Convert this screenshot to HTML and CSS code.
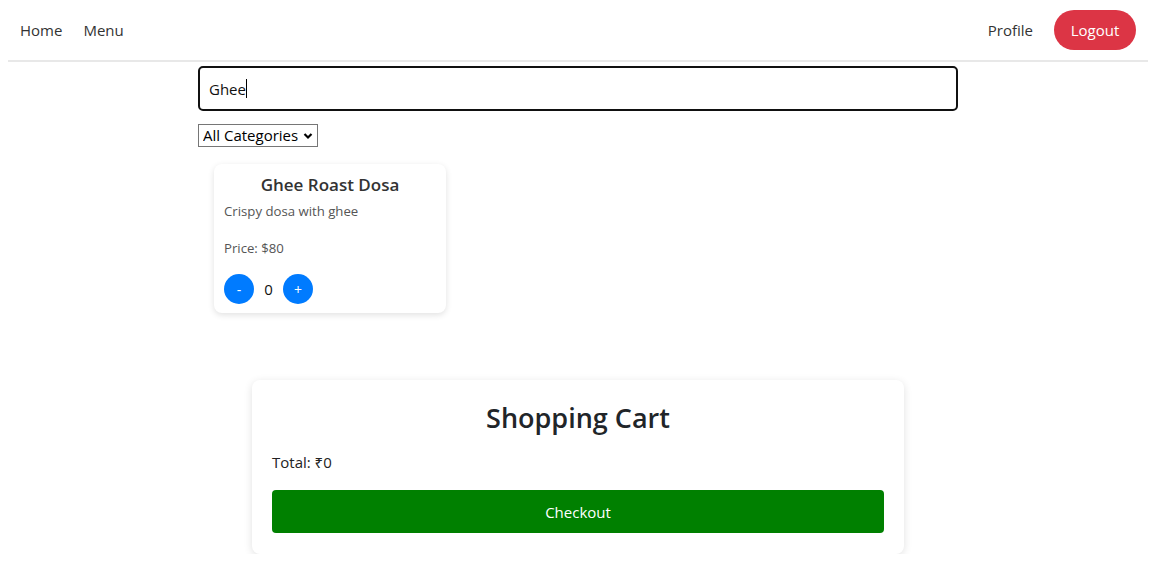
FILE: index.html
```html
<!DOCTYPE html>
<html lang="en">
<head>
<meta charset="utf-8">
<title>Menu</title>
<link rel="stylesheet" href="styles.css">
</head>
<body>
<div class="app">
  <nav class="navbar">
    <div class="nav-links">
      <a href="#" class="nav-link">Home</a>
      <a href="#" class="nav-link">Menu</a>
    </div>
    <div class="nav-links">
      <a href="#" class="nav-link">Profile</a>
      <button class="logout-btn">Logout</button>
    </div>
  </nav>

  <section class="menu">
    <div class="search-box"><span class="search-text">Ghee</span><span class="caret"></span></div>
    <div class="select-wrap">
      <select class="category-select">
        <option>All Categories</option>
      </select>
      <svg class="chevron" width="10" height="8" viewBox="0 0 10 8"><path d="M1.5 2 L5 5.5 L8.5 2" fill="none" stroke="#000" stroke-width="2.2"/></svg>
    </div>
    <div class="items">
      <div class="card">
        <h3 class="card-title">Ghee Roast Dosa</h3>
        <p class="card-desc">Crispy dosa with ghee</p>
        <p class="card-price">Price: $80</p>
        <div class="qty">
          <button class="qty-btn">-</button>
          <span class="qty-num">0</span>
          <button class="qty-btn">+</button>
        </div>
      </div>
    </div>
  </section>

  <section class="cart">
    <h2 class="cart-title">Shopping Cart</h2>
    <p class="cart-total">Total: ₹0</p>
    <button class="checkout-btn">Checkout</button>
  </section>
</div>
</body>
</html>
```

FILE: styles.css
```css
* { box-sizing: border-box; }

body {
  margin: 0 3px 8px 8px;
  font-family: "Segoe UI", "Open Sans", "Noto Sans", sans-serif;
  color: #333;
  background: #fff;
}

.app {
  width: 1140px;
}

.navbar {
  display: flex;
  justify-content: space-between;
  align-items: center;
  padding: 10px 12px 10px 12px;
  border-bottom: 2px solid #e8e8e8;
}

.nav-links {
  display: flex;
  align-items: center;
  gap: 21px;
}

.nav-link {
  color: #333;
  text-decoration: none;
  font-size: 15px;
}

.logout-btn {
  font-family: inherit;
  font-size: 15px;
  color: #fff;
  background: #dc3545;
  border: none;
  border-radius: 20px;
  height: 40px;
  width: 82px;
  padding: 0;
}

.menu {
  width: 760px;
  margin: 4px auto 0;
}

.search-box {
  display: flex;
  align-items: center;
  height: 45px;
  border: 2px solid #111;
  border-radius: 5px;
  padding: 0 9px;
  font-size: 15px;
  color: #111;
}

.caret {
  width: 1px;
  height: 19px;
  background: #000;
}

.select-wrap {
  display: inline-flex;
  align-items: center;
  margin-top: 13px;
  height: 23px;
  width: 120px;
  border: 1px solid #767676;
  padding: 0 4px 0 4px;
}

.category-select {
  appearance: none;
  -webkit-appearance: none;
  border: none;
  background: transparent;
  font-family: inherit;
  font-size: 15px;
  color: #000;
  padding: 0;
  margin: 0;
  flex: 1;
  height: 21px;
  line-height: 21px;
}

.chevron { flex: none; }

.items {
  display: flex;
  padding: 17px 16px 0;
}

.card {
  width: 232px;
  background: #fff;
  border-radius: 8px;
  box-shadow: 0 2px 6px rgba(0, 0, 0, 0.12);
  padding: 9px 10px 9px;
}

.card-title {
  margin: 0;
  text-align: center;
  font-size: 17px;
  font-weight: 600;
  color: #333;
  line-height: 24px;
}

.card-desc {
  margin: 4px 0 0;
  font-size: 13.2px;
  line-height: 20px;
  color: #555;
}

.card-price {
  margin: 17px 0 0;
  font-size: 13.2px;
  line-height: 20px;
  color: #555;
}

.qty {
  display: flex;
  align-items: center;
  gap: 10px;
  margin-top: 16px;
}

.qty-btn {
  width: 30px;
  height: 30px;
  border-radius: 50%;
  border: none;
  background: #007bff;
  color: #fff;
  font-family: inherit;
  font-size: 14px;
  padding: 0;
}

.qty-num {
  font-size: 15px;
  color: #111;
  width: 9px;
  text-align: center;
}

.cart {
  width: 652px;
  margin: 67px auto 0;
  padding: 20px 20px 21px;
  border-radius: 8px;
  background: #fff;
  box-shadow: 0 2px 8px rgba(0, 0, 0, 0.12);
}

.cart-title {
  margin: 0;
  text-align: center;
  font-size: 27px;
  font-weight: 600;
  line-height: 36px;
  color: #212529;
}

.cart-total {
  margin: 15px 0 0;
  font-size: 15px;
  line-height: 22px;
  color: #222;
}

.checkout-btn {
  display: block;
  width: 100%;
  height: 43px;
  margin-top: 17px;
  background: #008000;
  color: #fff;
  border: none;
  border-radius: 4px;
  font-family: inherit;
  font-size: 15px;
}
```
